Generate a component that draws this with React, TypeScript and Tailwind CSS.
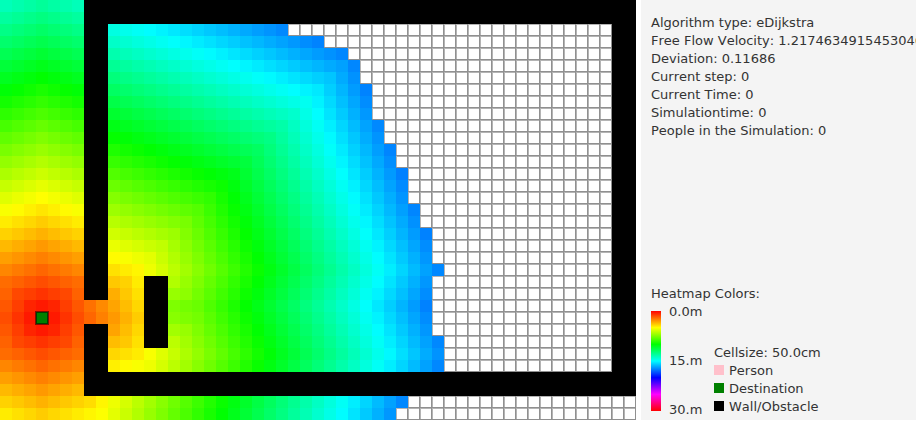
import React from "react";

const CELL = 12;
const COLS = 53;
const ROWS = 35;
const REACH = 35;
const DEST = { col: 3, row: 26 };

function isWall(c: number, r: number): boolean {
  if (c >= 7 && c <= 8 && r <= 32 && r !== 25 && r !== 26) return true;
  if (c >= 7 && (r <= 1 || r === 31 || r === 32)) return true;
  if (c >= 51 && r <= 32) return true;
  return c >= 12 && c <= 13 && r >= 23 && r <= 28;
}

function distances(): number[] {
  const dist: number[] = new Array(COLS * ROWS).fill(Infinity);
  const done: boolean[] = new Array(COLS * ROWS).fill(false);
  dist[DEST.row * COLS + DEST.col] = 0;
  for (;;) {
    let best = -1;
    for (let i = 0; i < dist.length; i++) {
      if (!done[i] && dist[i] <= REACH && (best < 0 || done[best] || dist[i] < dist[best])) best = i;
    }
    if (best < 0) return dist;
    done[best] = true;
    const c = best % COLS;
    const r = Math.floor(best / COLS);
    for (let dr = -1; dr <= 1; dr++) {
      for (let dc = -1; dc <= 1; dc++) {
        const nc = c + dc;
        const nr = r + dr;
        if (nc < 0 || nr < 0 || nc >= COLS || nr >= ROWS || isWall(nc, nr)) continue;
        const d = dist[best] + Math.hypot(dc, dr);
        if (d < dist[nr * COLS + nc]) dist[nr * COLS + nc] = d;
      }
    }
  }
}

const cells = distances().map((d, i) => ({ d, c: i % COLS, r: Math.floor(i / COLS) }));

function FloorPlan() {
  return (
    <svg
      width={COLS * CELL}
      height={ROWS * CELL}
      role="img"
      aria-label="Distance heatmap"
      shapeRendering="crispEdges"
      className="block shrink-0"
    >
      {cells.map(({ d, c, r }) => {
        const x = c * CELL;
        const y = r * CELL;
        if (isWall(c, r)) return <rect key={`${c}-${r}`} x={x} y={y} width={CELL} height={CELL} fill="#000" />;
        if (d <= REACH)
          return <rect key={`${c}-${r}`} x={x} y={y} width={CELL} height={CELL} fill={`hsl(${d * 6} 100% 50%)`} />;
        return (
          <g key={`${c}-${r}`}>
            <rect x={x} y={y} width={CELL} height={CELL} fill="#b4b4b4" />
            <rect x={x + 1} y={y + 1} width={CELL - 2} height={CELL - 2} fill="#fff" />
            <path d={`M${x + 11} ${y}h1v12h-12v-1h11z`} fill="#909090" />
          </g>
        );
      })}
      <rect x={35} y={311} width={14} height={14} fill="#7f0d00" />
      <rect x={36} y={312} width={12} height={12} fill="#004000" />
      <rect x={37} y={313} width={10} height={10} fill="#008000" />
    </svg>
  );
}

const stats = [
  "Algorithm type: eDijkstra",
  "Free Flow Velocity: 1.2174634915453046",
  "Deviation: 0.11686",
  "Current step: 0",
  "Current Time: 0",
  "Simulationtime: 0",
  "People in the Simulation: 0",
];

const legend = [
  { label: "Person", swatch: "bg-[#ffc0cb]" },
  { label: "Destination", swatch: "bg-[#008000]" },
  { label: "Wall/Obstacle", swatch: "bg-black" },
];

export default function App() {
  return (
    <main className="flex overflow-hidden bg-white pb-[5px] font-['DejaVu_Sans',sans-serif] text-[13px] leading-[18px] text-[#333333] [font-kerning:none]">
      <FloorPlan />
      <aside className="ml-[5px] flex min-w-0 flex-1 flex-col justify-between overflow-hidden bg-[#f4f4f4] pt-[14px] pl-[10px]">
        <ul className="whitespace-nowrap">
          {stats.map((line) => (
            <li key={line}>{line}</li>
          ))}
        </ul>
        <section>
          <h2>Heatmap Colors:</h2>
          <div className="flex items-end">
            <div className="mb-[9px] h-[100px] w-[10px] bg-[linear-gradient(to_bottom,#f00,#ff0,#0f0,#0ff,#00f,#f0f,#f00)]" />
            <div className="mb-px ml-2 flex h-[116px] w-[45px] flex-col justify-between">
              <span>0.0m</span>
              <span>15.m</span>
              <span>30.m</span>
            </div>
            <div className="mb-1">
              <p>Cellsize: 50.0cm</p>
              <ul>
                {legend.map(({ label, swatch }) => (
                  <li key={label} className="flex items-start gap-[5px]">
                    <span className={`mt-[3px] h-[10px] w-[10px] ${swatch}`} />
                    {label}
                  </li>
                ))}
              </ul>
            </div>
          </div>
        </section>
      </aside>
    </main>
  );
}
